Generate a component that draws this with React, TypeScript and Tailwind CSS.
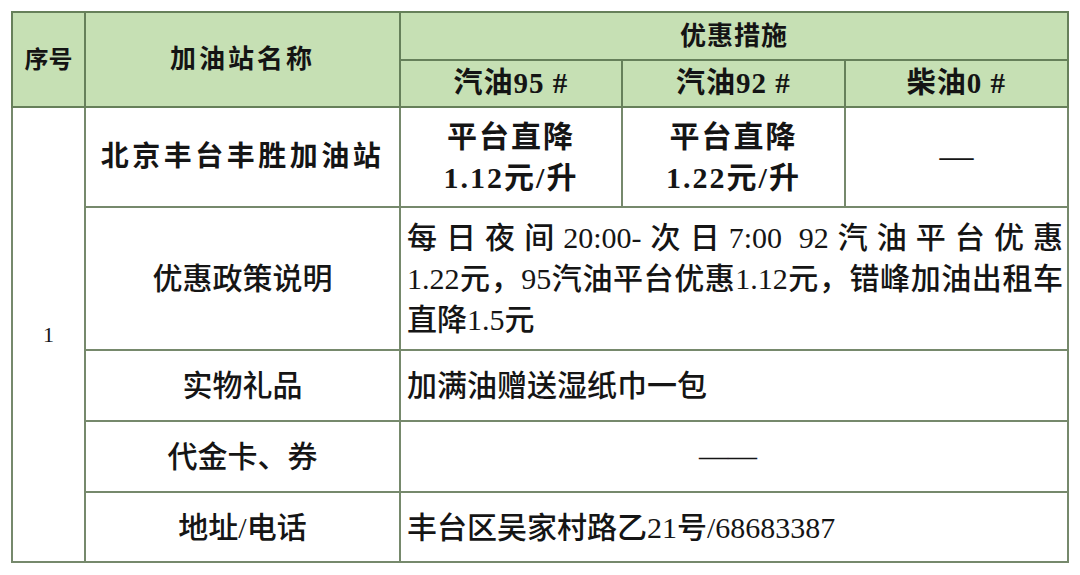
export default function App() {
  const cell = "border-2 border-[#76896c] text-center align-middle";
  const head = "border-2 border-[#66805a] bg-[#c6e0b4] text-center align-middle font-bold text-[#141414]";
  const body = "border-2 border-[#76896c] align-middle text-[30px] font-medium pl-[6px]";

  return (
    <div className="min-h-screen bg-white pt-[11px] pl-[11px] font-['Liberation_Serif','Noto_Sans_CJK_SC',serif] text-[#151515]">
      <table className="table-fixed border-collapse w-[1058px]">
        <colgroup>
          <col className="w-[73px]" />
          <col className="w-[315px]" />
          <col className="w-[222px]" />
          <col className="w-[223px]" />
          <col className="w-[223px]" />
        </colgroup>
        <thead>
          <tr className="h-[48px]">
            <th rowSpan={2} className={`${head} text-[24px]`}>序号</th>
            <th rowSpan={2} className={`${head} text-[26px] tracking-[3px]`}>加油站名称</th>
            <th colSpan={3} className={`${head} text-[26px] tracking-[1px]`}>优惠措施</th>
          </tr>
          <tr className="h-[47px]">
            <th className={`${head} text-[29px] tracking-[1px]`}>汽油95 #</th>
            <th className={`${head} text-[29px] tracking-[1px]`}>汽油92 #</th>
            <th className={`${head} text-[29px] tracking-[1px]`}>柴油0 #</th>
          </tr>
        </thead>
        <tbody>
          <tr className="h-[100px]">
            <td rowSpan={5} className={`${cell} text-[22px]`}>1</td>
            <td className={`${cell} text-[28px] font-bold tracking-[3.5px]`}>北京丰台丰胜加油站</td>
            <td className={`${cell} text-[30px] font-bold leading-[41px] tracking-[2px]`}>
              平台直降
              <br />
              1.12元/升
            </td>
            <td className={`${cell} text-[30px] font-bold leading-[41px] tracking-[2px]`}>
              平台直降
              <br />
              1.22元/升
            </td>
            <td className={`${cell} text-[34px] pb-[4px]`}>—</td>
          </tr>
          <tr className="h-[143px]">
            <td className={`${cell} text-[30px] font-medium`}>优惠政策说明</td>
            <td colSpan={3} className={`${body} leading-[41px] pr-[4px]`}>
              <div className="text-justify [text-align-last:justify]">每日夜间20:00-次日7:00 92汽油平台优惠</div>
              <div className="text-justify [text-align-last:justify]">1.22元，95汽油平台优惠1.12元，错峰加油出租车</div>
              <div>直降1.5元</div>
            </td>
          </tr>
          <tr className="h-[71px]">
            <td className={`${cell} text-[30px] font-medium`}>实物礼品</td>
            <td colSpan={3} className={body}>加满油赠送湿纸巾一包</td>
          </tr>
          <tr className="h-[71px]">
            <td className={`${cell} text-[30px] font-medium`}>代金卡、券</td>
            <td colSpan={3} className={`${cell} text-[29px] pr-[12px]`}>——</td>
          </tr>
          <tr className="h-[70px]">
            <td className={`${cell} text-[30px] font-medium`}>地址/电话</td>
            <td colSpan={3} className={body}>丰台区吴家村路乙21号/68683387</td>
          </tr>
        </tbody>
      </table>
    </div>
  );
}
